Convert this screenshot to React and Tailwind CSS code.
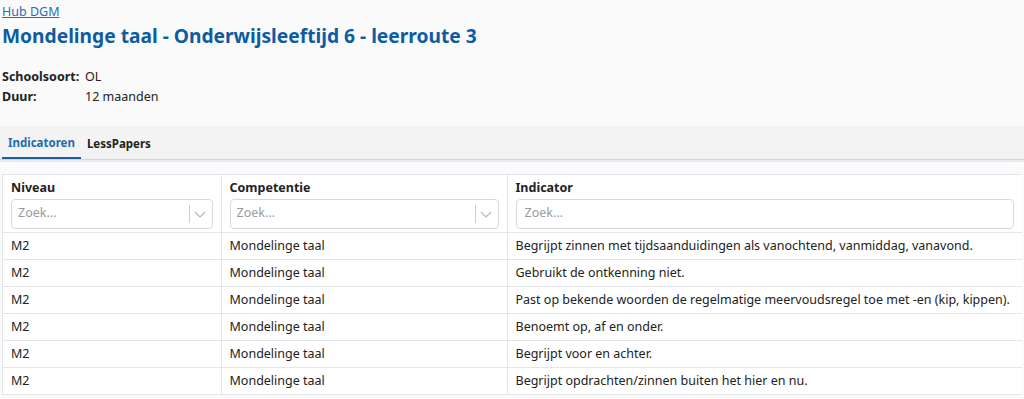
import React from 'react';

const rows = [
  'Begrijpt zinnen met tijdsaanduidingen als vanochtend, vanmiddag, vanavond.',
  'Gebruikt de ontkenning niet.',
  'Past op bekende woorden de regelmatige meervoudsregel toe met -en (kip, kippen).',
  'Benoemt op, af en onder.',
  'Begrijpt voor en achter.',
  'Begrijpt opdrachten/zinnen buiten het hier en nu.',
];

const SelectFilter = () => (
  <div className="flex h-[30px] items-center rounded border border-[#d9d9d9] bg-white pl-[6px] pr-[2px] font-normal">
    <span className="flex-1 text-[12.5px] text-[#9a9a9a]">Zoek...</span>
    <span className="h-[18px] w-px bg-[#cccccc]" />
    <svg width="20" height="20" viewBox="0 0 20 20" className="text-[#bdbdbd]">
      <path d="M5 8l5 5 5-5" fill="none" stroke="currentColor" strokeWidth="1.3" />
    </svg>
  </div>
);

const App = () => {
  return (
    <div className="min-h-[399px] bg-[#fafafa] font-['Noto_Sans',sans-serif] text-[12.5px] text-[#222]">
      <div className="px-[2px] pt-[3px]">
        <a href="#" className="text-[12.5px] leading-[18px] text-[#2a6eb0] underline">Hub DGM</a>
        <h1 className="mt-[1px] text-[19.2px] font-bold leading-[26px] text-[#0d5ca3]">
          Mondelinge taal - Onderwijsleeftijd 6 - leerroute 3
        </h1>
        <div className="mt-[18px] grid grid-cols-[83px_1fr] leading-[20px]">
          <span className="font-bold">Schoolsoort:</span>
          <span>OL</span>
          <span className="font-bold">Duur:</span>
          <span>12 maanden</span>
        </div>
      </div>

      <div className="mt-[19px] flex h-[34px] items-stretch border-b border-[#d4d4d4] bg-[#f3f3f3] px-[2px]">
        <div className="flex items-center border-b-2 border-[#1f5f9f] px-[6px] pt-[2px] text-[11.5px] font-bold text-[#1f6bb0]">
          Indicatoren
        </div>
        <div className="flex items-center px-[6px] pt-[2px] text-[11.5px] font-bold text-[#222]">
          LessPapers
        </div>
      </div>
      <div className="h-[2px] bg-[#e6ebf1]" />

      <div className="mx-[2px] mt-[12px] border-l border-t border-[#e3e6ea] bg-white">
        <table className="w-full border-collapse">
          <thead>
            <tr>
              <th className="w-[218px] border-r border-b border-[#e3e6ea] px-[8px] pb-[3px] pt-[3px] text-left align-top">
                <div className="mb-[1px] text-[12.5px] font-bold leading-[20px]">Niveau</div>
                <SelectFilter />
              </th>
              <th className="w-[286px] border-r border-b border-[#e3e6ea] px-[8px] pb-[3px] pt-[3px] text-left align-top">
                <div className="mb-[1px] text-[12.5px] font-bold leading-[20px]">Competentie</div>
                <SelectFilter />
              </th>
              <th className="border-b border-[#e3e6ea] px-[8px] pb-[3px] pt-[3px] text-left align-top">
                <div className="mb-[1px] text-[12.5px] font-bold leading-[20px]">Indicator</div>
                <div className="flex h-[30px] items-center rounded border border-[#d9d9d9] bg-white px-[8px] text-[12.5px] font-normal text-[#9a9a9a]">
                  Zoek...
                </div>
              </th>
            </tr>
          </thead>
          <tbody>
            {rows.map((text, i) => (
              <tr key={i} className="h-[27px]">
                <td className="whitespace-nowrap border-r border-b border-[#e3e6ea] px-[8px] leading-[26px]">M2</td>
                <td className="whitespace-nowrap border-r border-b border-[#e3e6ea] px-[8px] leading-[26px]">Mondelinge taal</td>
                <td className="whitespace-nowrap border-b border-[#e3e6ea] px-[8px] leading-[26px]">{text}</td>
              </tr>
            ))}
          </tbody>
        </table>
      </div>
    </div>
  );
};

export default App;
